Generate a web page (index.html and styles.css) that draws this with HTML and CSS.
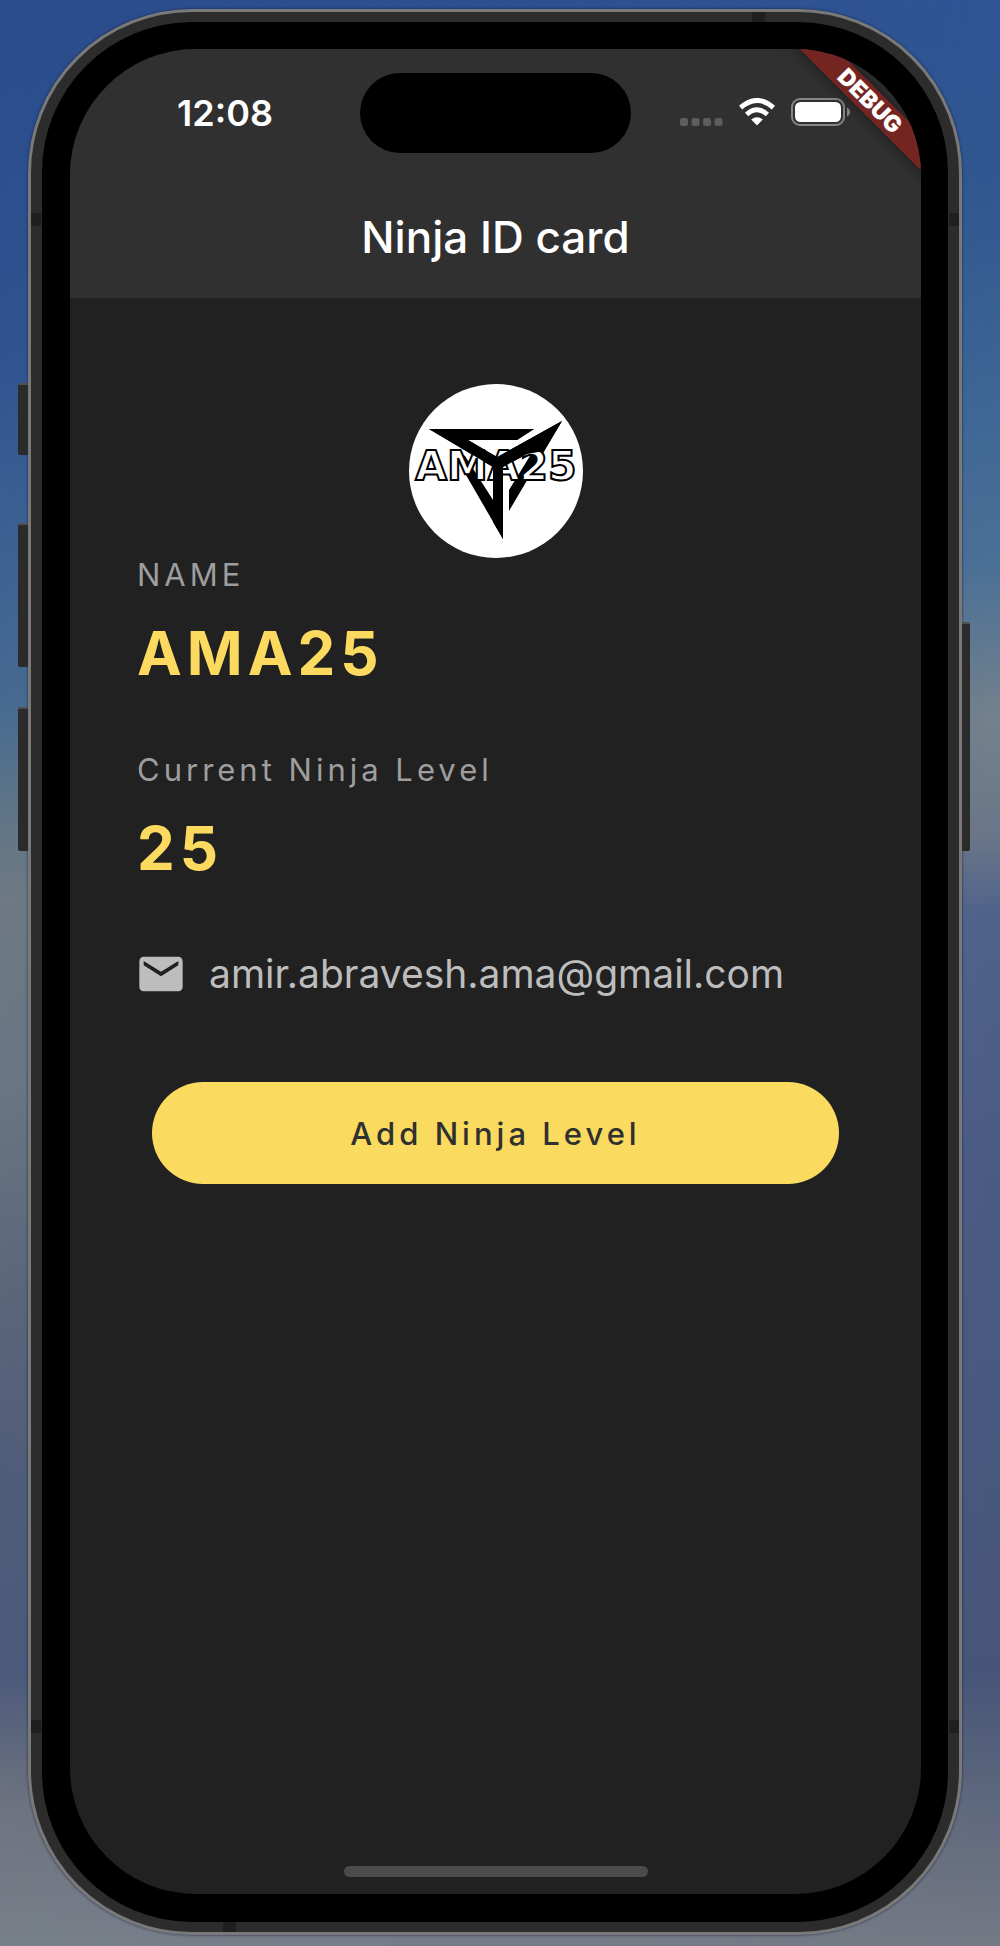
FILE: index.html
```html
<!DOCTYPE html>
<html lang="en">
<head>
<meta charset="utf-8">
<meta name="viewport" content="width=device-width, initial-scale=1">
<title>Ninja ID card</title>
<link rel="stylesheet" href="styles.css">
</head>
<body class="desktop">
<div class="phone">
  <span class="key key-silent"></span>
  <span class="key key-up"></span>
  <span class="key key-down"></span>
  <span class="key key-power"></span>
  <span class="band band-side band-left-top"></span>
  <span class="band band-side band-right-top"></span>
  <span class="band band-side band-left-bottom"></span>
  <span class="band band-side band-right-bottom"></span>
  <span class="band band-edge band-top"></span>
  <span class="band band-edge band-bottom"></span>
  <div class="bezel">
    <div class="screen">
      <header class="app-header">
        <div class="status-bar">
          <time class="clock">12:08</time>
          <div class="island"></div>
          <div class="status-icons">
            <svg class="cellular" width="43" height="28" viewBox="0 0 43 28" aria-hidden="true"><g fill="#5d5d5d"><rect x="0" y="20" width="8" height="8" rx="2.5"/><rect x="11.5" y="20" width="8" height="8" rx="2.5"/><rect x="23" y="20" width="8" height="8" rx="2.5"/><rect x="34.500" y="20" width="8" height="8" rx="2.5"/></g></svg>
            <svg class="wifi" width="36" height="28" viewBox="0 0 36 28" aria-hidden="true"><g fill="none" stroke="#fff" stroke-width="4.800"><path d="M1.600 9.600Q18-4.800 34.400 9.600"/><path d="M7.600 16.500Q18 7 28.400 16.500"/></g><path d="M12.200 21.500Q18 17 23.800 21.500L18.700 26.700Q18 27.400 17.300 26.700Z" fill="#fff"/></svg>
            <svg class="battery" width="60" height="28" viewBox="0 0 60 28" aria-hidden="true"><rect x="1" y="1" width="52" height="26" rx="8" fill="none" stroke="#858585" stroke-width="2"/><rect x="4" y="4" width="46" height="20" rx="5.500" fill="#fff"/><path d="M56 9.500Q59 11 59 14T56 18.500Z" fill="#858585"/></svg>
          </div>
        </div>
        <h1 class="title">Ninja ID card</h1>
      </header>
      <main class="card">
        <svg class="avatar" viewBox="0 0 174 174" role="img" aria-label="AMA25 logo">
          <circle cx="87" cy="87" r="87" fill="#fff"/>
          <path d="M20 45H125L108 56H59L88 73L153 37L100 127V106L124 67L94 83V155L42 65L56 72L84 116V83Z" fill="#000"/>
          <text class="avatar-text" x="87" y="96" text-anchor="middle">AMA25</text>
          <path d="M20 45H125L108 56H59L88 73L153 37L135 67L118 70L94 83V155L84 138V83Z" fill="#000"/>
        </svg>
        <dl class="facts">
          <div class="fact"><dt class="label">NAME</dt><dd class="value">AMA25</dd></div>
          <div class="fact"><dt class="label">Current Ninja Level</dt><dd class="value">25</dd></div>
        </dl>
        <div class="contact">
          <svg class="mail" viewBox="0 0 24 24" aria-hidden="true"><path fill="#bdbdbd" d="M20 4H4c-1.100 0-1.990.9-1.990 2L2 18c0 1.100.9 2 2 2h16c1.100 0 2-.9 2-2V6c0-1.100-.9-2-2-2zm0 4l-8 5-8-5V6l8 5 8-5v2z"/></svg>
          <span class="email">amir.abravesh.ama@gmail.com</span>
        </div>
        <button class="add-level" type="button">Add Ninja Level</button>
      </main>
      <div class="home-indicator"></div>
      <div class="debug-banner">DEBUG</div>
    </div>
  </div>
</div>
</body>
</html>
```
FILE: styles.css
```css
* { box-sizing: border-box; }

.desktop {
  position: relative;
  display: flex;
  min-height: 100vh;
  margin: 0;
  padding: 9px 38px 11px 28px;
  font-family: Inter, "Liberation Sans", sans-serif;
  background: linear-gradient(#2b4c8c 0, #2f5490 18%, #3b6193 27%, #476a92 36%, #607687 42%, #6e7984 46%, #6a7683 56%, #5c677a 66%, #505d7a 76%, #4c5a7b 86%, #6f7480 93%, #78808a 100%);
}

.desktop::before {
  content: "";
  position: absolute;
  inset: 0;
  background: linear-gradient(#2f5494 0, #30578f 9%, #3d6695 20%, #4b7096 29%, #74818c 37%, #6a7688 43%, #4f628a 47%, #4a5b84 60%, #475578 86%, #5f697d 93%, #757984 100%);
  mask-image: linear-gradient(to right, transparent, #000);
}

.phone {
  position: relative;
  display: flex;
  flex: 1;
  padding: 10px 11px;
  border: 3px solid #797979;
  border-radius: 164px;
  background: #2c2c2c;
  box-shadow: 0 0 2px 1px rgba(20, 30, 60, 0.4);
}

.bezel {
  display: flex;
  flex: 1;
  padding: 27px 27px 28px 28px;
  border-radius: 150px;
  background: #000;
}

.screen {
  position: relative;
  display: flex;
  flex: 1;
  flex-direction: column;
  overflow: hidden;
  border-radius: 126px;
  background: #212121;
}

.key {
  position: absolute;
  left: -13px;
  width: 10px;
  height: 144px;
  border-top: 2px solid #505050;
  border-radius: 2px 0 0 2px;
  background: #2b2b2b;
}

.key-silent { top: 371px; height: 72px; }
.key-up { top: 511px; }
.key-down { top: 695px; }
.key-power { top: 610px; right: -11px; left: auto; width: 8px; height: 229px; border-radius: 0 2px 2px 0; }

.band { position: absolute; background: #1f1f1f; }
.band-side { width: 10px; height: 13px; }
.band-edge { width: 13px; height: 10px; }
.band-left-top { top: 201px; left: 0; }
.band-right-top { top: 201px; right: 0; }
.band-left-bottom { bottom: 199px; left: 0; }
.band-right-bottom { bottom: 199px; right: 0; }
.band-top { top: 0; right: 194px; }
.band-bottom { bottom: 0; left: 192px; }

.app-header { background: #303030; }

.status-bar {
  display: grid;
  grid-template-columns: 1fr 271px 1fr;
  align-items: center;
  height: 128px;
}

.clock {
  padding-left: 20px;
  color: #fff;
  font-size: 36px;
  font-weight: 600;
  line-height: 44px;
  text-align: center;
}

.island { height: 80px; border-radius: 40px; background: #000; }

.status-icons { display: flex; gap: 16px; padding: 0 0 2px 49px; }

.title {
  margin: 0;
  color: #fff;
  font-size: 44px;
  font-weight: 500;
  line-height: 121px;
  text-align: center;
}

.card {
  display: flex;
  flex: 1;
  flex-direction: column;
  padding: 86px 65px 0;
}

.avatar { align-self: center; width: 174px; height: 174px; }

.avatar-text {
  fill: #fff;
  stroke: #000;
  stroke-width: 2px;
  font-family: "DejaVu Sans", sans-serif;
  font-size: 41px;
  font-weight: 700;
}

.facts { display: grid; gap: 64px; margin: 0; padding-left: 2px; }
.fact { display: grid; gap: 25px; }

.label {
  color: #9e9e9e;
  font-size: 31px;
  line-height: 34px;
  letter-spacing: 4px;
}

.value {
  margin: 0;
  color: #fbda5f;
  font-size: 60px;
  font-weight: 700;
  line-height: 72px;
  letter-spacing: 5px;
}

.contact {
  display: flex;
  align-items: center;
  gap: 22px;
  margin-top: 64px;
  color: #bdbdbd;
  font-size: 39px;
  line-height: 48px;
}

.mail { width: 52px; height: 52px; }

.add-level {
  height: 102px;
  margin: 82px 17px 0;
  border: 0;
  border-radius: 51px;
  color: #303030;
  background: #fada5f;
  font-family: inherit;
  font-size: 31px;
  font-weight: 500;
  letter-spacing: 4px;
}

.home-indicator {
  align-self: center;
  width: 304px;
  height: 11px;
  margin-bottom: 17px;
  border-radius: 6px;
  background: #4b4b4b;
}

.debug-banner {
  position: absolute;
  top: 39px;
  right: -69px;
  width: 240px;
  color: #fff;
  background: #752521;
  box-shadow: 0 0 13px rgba(0, 0, 0, 0.5);
  font-size: 23px;
  font-weight: 900;
  line-height: 26px;
  text-align: center;
  transform: rotate(45deg);
}
```
